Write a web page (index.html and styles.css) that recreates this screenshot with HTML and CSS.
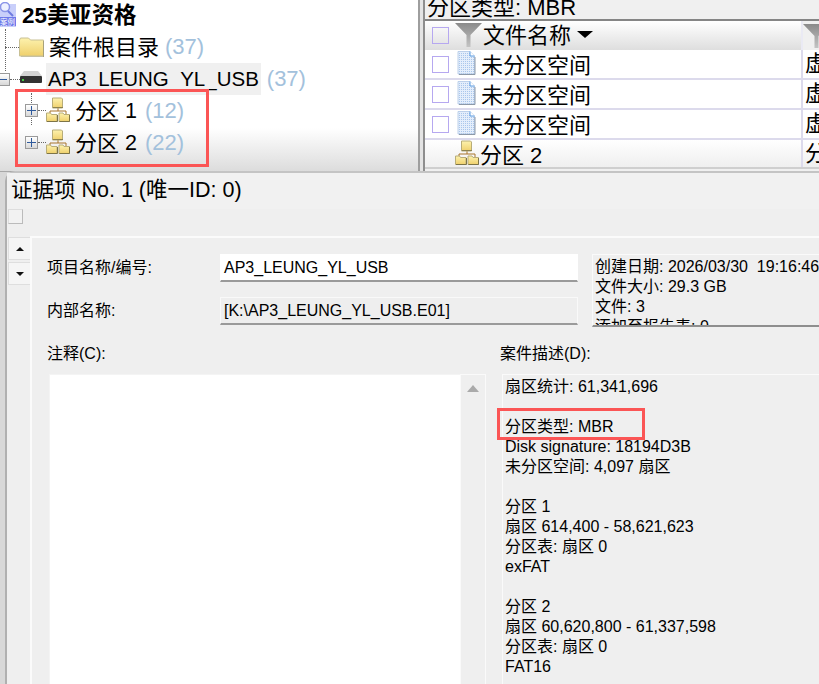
FILE: index.html
```html
<!DOCTYPE html>
<html lang="zh-CN">
<head>
<meta charset="utf-8">
<title>证据项</title>
<link rel="stylesheet" href="styles.css">
</head>
<body>
<svg class="defs" width="0" height="0" aria-hidden="true">
  <defs>
    <linearGradient id="fold" x1="0" y1="0" x2="0" y2="1"><stop offset="0" stop-color="#fdf2ae"/><stop offset="1" stop-color="#efd06c"/></linearGradient>
    <linearGradient id="funnel" x1="0" y1="0" x2="0" y2="1"><stop offset="0" stop-color="#8a8a8a"/><stop offset="1" stop-color="#c4c4c4"/></linearGradient>
    <pattern id="dots" width="2" height="2" patternUnits="userSpaceOnUse"><rect width="2" height="2" fill="#e4eefb"/><rect width="1" height="1" fill="#a9c6ec"/></pattern>
    <symbol id="parts" viewBox="0 0 24 25">
      <path d="M12 10v4M4 17v-3h16v3" fill="none" stroke="#a8752a" stroke-width="1"/>
      <path d="M6.500 1h9l1 1v9h-10z" fill="url(#fold)" stroke="#b8ad78"/>
      <path d="M7 10.500h10" stroke="#8c8250"/>
      <path d="M.5 16h4l1 1.500h5.500v7H.500z" fill="url(#fold)" stroke="#b8ad78"/>
      <path d="M1 24.500h10.500V18" fill="none" stroke="#7d7448"/>
      <path d="M13 16h4l1 1.500h5.500v7H13z" fill="url(#fold)" stroke="#b8ad78"/>
      <path d="M13.500 24.500h10V18" fill="none" stroke="#7d7448"/>
    </symbol>
    <symbol id="doc" viewBox="0 0 19 24">
      <path d="M1 .5h12l4.500 4.500v18H1z" fill="url(#dots)" stroke="#bcd0ea"/>
      <path d="M13 .5v4.500h4.500" fill="#fff" stroke="#5a9be0"/>
      <path d="M2 23.500h16V6" fill="none" stroke="#8d99a8"/>
    </symbol>
    <symbol id="fun" viewBox="0 0 27 24">
      <path d="M0 0h27L15.500 12v12h-4V12z" fill="url(#funnel)"/>
    </symbol>
  </defs>
</svg>
<div class="app">
  <div class="top">
    <section class="tree">
      <div class="case">
        <svg class="case-icon" width="16" height="25" viewBox="0 0 16 25">
          <rect y="2" width="16" height="23" fill="#c9cffa"/>
          <circle cx="5" cy="5" r="4.500" fill="#eef1ff" stroke="#8c96e8" stroke-width="1.500"/>
          <path d="M8 9l5 5" stroke="#6f7be0" stroke-width="2"/>
          <rect y="15" width="16" height="9" fill="#6d78ea"/>
          <text class="case-icon-text" x="0" y="22.500">案例</text>
        </svg>
        <strong class="case-name">25美亚资格</strong>
      </div>
      <div class="node lvl1">
        <span class="vline v-root"></span>
        <span class="hline"></span>
        <svg class="folder" width="25" height="20" viewBox="0 0 25 20">
          <path d="M.5 3l1-2h8l2 2h13v16H.500z" fill="url(#fold)" stroke="#c8c094"/>
          <path d="M24.500 4v16H2" fill="none" stroke="#a8a27c"/>
        </svg>
        <span class="zh">案件根目录</span><span class="count">(37)</span>
      </div>
      <div class="node lvl1">
        <span class="box box-minus"><i class="bar"></i></span>
        <span class="hline hline-short"></span>
        <svg class="drive" width="22" height="12" viewBox="0 0 22 12">
          <path d="M4 0h14l4 5H0z" fill="#d4d4d4"/>
          <rect y="5" width="22" height="7" rx="1" fill="#333"/>
          <rect x="2" y="8" width="2" height="2" fill="#4c4"/>
        </svg>
        <span class="sel">AP3_LEUNG_YL_USB</span><span class="count">(37)</span>
      </div>
      <div class="node lvl2">
        <span class="vline v-part"></span>
        <span class="box"><i class="bar"></i><i class="bar bar-v"></i></span>
        <span class="hline hline-tiny"></span>
        <svg class="parts" width="24" height="25"><use href="#parts"/></svg>
        <span class="zh">分区</span><span class="num">1</span><span class="count">(12)</span>
      </div>
      <div class="node lvl2">
        <span class="box"><i class="bar"></i><i class="bar bar-v"></i></span>
        <span class="hline hline-tiny"></span>
        <svg class="parts" width="24" height="25"><use href="#parts"/></svg>
        <span class="zh">分区</span><span class="num">2</span><span class="count">(22)</span>
      </div>
    </section>
    <div class="split"></div>
    <section class="list">
      <div class="list-caption">分区类型: MBR</div>
      <div class="grid-head">
        <div class="col-main">
          <span class="check"></span>
          <svg class="funnel" width="27" height="24"><use href="#fun"/></svg>
          <span class="head-label">文件名称</span>
          <span class="sort"></span>
        </div>
        <div class="col-next"><svg class="funnel" width="27" height="24"><use href="#fun"/></svg></div>
      </div>
      <div class="grid-row">
        <div class="col-main"><span class="check"></span><svg class="doc" width="19" height="24"><use href="#doc"/></svg><span class="cell-text">未分区空间</span></div>
        <div class="col-next">虚</div>
      </div>
      <div class="grid-row">
        <div class="col-main"><span class="check"></span><svg class="doc" width="19" height="24"><use href="#doc"/></svg><span class="cell-text">未分区空间</span></div>
        <div class="col-next">虚</div>
      </div>
      <div class="grid-row">
        <div class="col-main"><span class="check"></span><svg class="doc" width="19" height="24"><use href="#doc"/></svg><span class="cell-text">未分区空间</span></div>
        <div class="col-next">虚</div>
      </div>
      <div class="grid-row grid-row-part">
        <div class="col-main"><svg class="parts parts-row" width="24" height="25"><use href="#parts"/></svg><span class="cell-text">分区 2</span></div>
        <div class="col-next">分</div>
      </div>
    </section>
  </div>

  <section class="window">
    <div class="win-title">证据项 No. 1 (唯一ID: 0)</div>
    <div class="win-tool"><span class="tool-btn"></span></div>
    <div class="win-body">
      <div class="spin">
        <button class="spin-btn" type="button"><span class="tri-up"></span></button>
        <button class="spin-btn" type="button"><span class="tri-down"></span></button>
      </div>
      <div class="panel">
        <div class="form-row">
          <div class="fields">
            <label class="f-label">项目名称/编号:</label>
            <div class="input input-white">AP3_LEUNG_YL_USB</div>
            <label class="f-label">内部名称:</label>
            <div class="input">[K:\AP3_LEUNG_YL_USB.E01]</div>
          </div>
          <div class="info">
            <div>创建日期: 2026/03/30&nbsp; 19:16:46</div>
            <div>文件大小: 29.3 GB</div>
            <div>文件: 3</div>
            <div>添加至报告表: 0</div>
          </div>
        </div>
        <div class="memo-row">
          <div class="memo-col">
            <div class="memo-label memo-label-left">注释(C):</div>
            <div class="memo-left">
              <div class="memo-white"></div>
              <div class="scroll"><span class="scroll-up"></span></div>
            </div>
          </div>
          <div class="desc-col">
            <div class="memo-label desc-label">案件描述(D):</div>
            <div class="desc">扇区统计: 61,341,696

分区类型: MBR
Disk signature: 18194D3B
未分区空间: 4,097 扇区

分区 1
扇区 614,400 - 58,621,623
分区表: 扇区 0
exFAT

分区 2
扇区 60,620,800 - 61,337,598
分区表: 扇区 0
FAT16</div>
          </div>
        </div>
      </div>
    </div>
  </section>

  <div class="mark mark-tree"></div>
  <div class="mark mark-type"></div>
</div>
</body>
</html>
```
FILE: styles.css
```css
* { box-sizing: border-box; }
html, body { margin: 0; padding: 0; height: 100%; }
body {
  overflow: hidden;
  background: #d8d8d8;
  color: #000;
  font-family: "Liberation Sans", "Noto Sans CJK SC", sans-serif;
}
.defs { position: absolute; }
.app { position: relative; width: 819px; height: 684px; overflow: hidden; display: flex; flex-direction: column; }

/* upper panes */
.top { height: 172px; flex: none; display: flex; border-bottom: 1px solid #a8a8a8; }
.tree {
  width: 418px; flex: none; overflow: hidden;
  background: linear-gradient(#fff 0, #fff 128px, #dcdcdc 171px);
}
.case { height: 31px; display: flex; align-items: center; }
.case-icon { margin-top: -2px; flex: none; }
.case-icon-text { font-size: 7.500px; fill: #fff; }
.case-name { margin-left: 6px; font-size: 22.400px; line-height: 32px; }
.node { position: relative; height: 32px; display: flex; align-items: center; font-size: 22px; white-space: nowrap; }
.lvl2 { padding-left: 25px; }
.vline { position: absolute; width: 0; border-left: 1px dotted #666; }
.v-root { left: 5px; top: -2px; height: 42px; }
.v-part { left: 31px; top: -2px; height: 32px; }
.hline { display: block; width: 14px; margin-left: 5px; border-top: 1px dotted #666; flex: none; }
.hline-short { width: 10px; margin-left: 0; }
.hline-tiny { width: 8px; margin-left: 0; margin-top: -2px; }
.folder { flex: none; }
.drive { flex: none; margin-top: -5px; }
.parts { flex: none; margin-top: -3px; }
.zh { margin-left: 5px; margin-top: -4px; }
.lvl2 .zh { margin-left: 5px; }
.sel {
  margin-left: 4px; padding: 0 2px; height: 32px; line-height: 32px;
  background: #f0f0f0; font-size: 20.500px;
}
.num { margin-left: 6px; font-size: 21.500px; }
.count { margin-left: 6px; color: #a3c1dc; font-size: 22px; }
.num + .count { margin-left: 8px; }
.box {
  position: relative; display: block; flex: none; width: 13px; height: 13px;
  border: 1px solid #9a9a9a; background: linear-gradient(#fff, #d8d8d8);
}
.lvl2 .box { margin-top: -2px; }
.box-minus { margin-left: -3px; }
.bar { position: absolute; left: 1px; top: 5px; width: 9px; height: 1px; background: #2f5a9c; }
.bar-v { left: 5px; top: 1px; width: 1px; height: 9px; }
.box-minus .bar { left: 0; }

.split {
  width: 7px; flex: none;
  background: linear-gradient(90deg, #9e9e9e 0, #9e9e9e 2px, #e4e4e4 2px, #e4e4e4 5px, #8e8e8e 5px);
}
.list { flex: 1; min-width: 0; background: #f0f0f0; overflow: hidden; }
.list-caption { height: 19px; margin-left: 2px; font-size: 22px; line-height: 16px; white-space: nowrap; }
.grid-head {
  height: 31px; display: flex; border-top: 2px solid #858585;
  background: linear-gradient(#fff, #dedede);
}
.grid-row {
  height: 30px; display: flex; background: #fff;
  border-bottom: 2px solid #dcdaec; font-size: 22px;
}
.grid-row-part { background: linear-gradient(#fff, #efefef); height: 29px; border-bottom: 2px solid #cfcfcf; }
.col-main { width: 376px; flex: none; display: flex; align-items: center; padding-left: 7px; white-space: nowrap; }
.col-next { flex: 1; padding-left: 2px; border-left: 2px solid #dcdaec; overflow: hidden; white-space: nowrap; line-height: 28px; }
.grid-head .col-next { border-left-color: #eaeaf4; background: #f0f0f0; padding-left: 0; }
.check { width: 17px; height: 17px; flex: none; border: 1px solid #b6a8f0; background: #fff; }
.grid-head .check { background: transparent; }
.funnel { margin-left: 6px; margin-top: -2px; flex: none; }
.grid-head .col-next .funnel { margin-left: 0; display: block; margin-top: 3px; }
.doc { margin-left: 8px; flex: none; margin-top: -2px; }
.cell-text { margin-top: -2px; }
.doc + .cell-text { margin-left: 5px; }
.head-label { margin-left: 1px; margin-top: -5px; font-size: 22px; }
.sort { margin-left: 6px; margin-top: -2px; width: 0; height: 0; border: 8px solid transparent; border-top: 7px solid #000; border-bottom: 0; }
.parts-row { margin-left: 23px; margin-top: -2px; }
.parts-row + .cell-text { margin-left: 1px; }

/* dialog */
.window {
  flex: 1; min-height: 0; margin-left: 5px; margin-top: -1px;
  display: flex; flex-direction: column;
  background: #efefef;
  border-top: 2px solid #c4c4c4; border-left: 2px solid #b0b0b0;
  border-top-left-radius: 10px;
  position: relative;
}
.win-title { height: 36px; padding-left: 4px; font-size: 21.500px; line-height: 35px; white-space: nowrap; background: #f1f1f1; }
.win-tool { height: 27px; }
.tool-btn { display: block; width: 15px; height: 15px; margin-left: 1px; background: #f2f2f2; border: 1px solid #ddd; border-right-color: #bbb; border-bottom-color: #bbb; }
.win-body { flex: 1; min-height: 0; display: flex; }
.spin { width: 23px; flex: none; padding-left: 1px; margin-top: 1px; display: flex; flex-direction: column; gap: 2px; }
.spin-btn {
  width: 23px; height: 23px; padding: 0; display: flex; align-items: center; justify-content: center;
  background: #f5f5f5; border: 1px solid #dedede; flex: none;
}
.tri-up { width: 0; height: 0; border: 4px solid transparent; border-bottom: 4px solid #111; border-top: 0; }
.tri-down { width: 0; height: 0; border: 4px solid transparent; border-top: 4px solid #111; border-bottom: 0; }
.panel {
  flex: 1; min-width: 0; overflow: hidden;
  border-top: 2px solid #fbfbfb; border-left: 2px solid #fbfbfb;
  padding: 16px 0 0 16px;
}
.form-row { display: flex; height: 73px; font-size: 16px; }
.fields { display: grid; grid-template-columns: 172px 358px; grid-template-rows: 28px 28px; row-gap: 15px; flex: none; }
.f-label { align-self: center; line-height: 28px; margin-left: -1px; }
.input {
  padding: 0 3px; font-size: 16px; line-height: 25px; white-space: nowrap;
  background: #eee; border: 1px solid #f9f9f9; border-bottom: 2px solid #9a9a9a;
}
.input-white { background: #fff; border-color: #fff; border-bottom-color: #9a9a9a; }
.info {
  margin-left: 14px; width: 260px; height: 73px; overflow: hidden; padding: 2px 0 0 2px;
  line-height: 20px; white-space: nowrap;
  border-top: 1px solid #fafafa; border-left: 1px solid #fafafa; border-bottom: 2px solid #8e8e8e;
}
.memo-row { display: flex; margin-top: 17px; font-size: 16px; }
.memo-col { width: 438px; flex: none; }
.memo-label { height: 30px; line-height: 20px; }
.memo-label-left { margin-left: -1px; }
.memo-left { display: flex; height: 330px; margin-left: 1px; }
.memo-white { width: 411px; background: #fff; border: 1px solid #f4f4f4; border-right: 0; }
.scroll { width: 26px; flex: none; background: #efefef; border: 1px solid #fafafa; border-bottom: 0; display: flex; justify-content: center; padding-top: 10px; }
.scroll-up { width: 0; height: 0; border: 6px solid transparent; border-bottom: 7px solid #aaa; border-top: 0; }
.desc-col { margin-left: 14px; flex: none; width: 320px; }
.desc-label { margin-left: 0; }
.desc {
  margin-left: 2px; height: 330px; overflow: hidden; padding: 2px 0 0 2px;
  line-height: 20px; white-space: pre-line;
  border-top: 1px solid #fafafa; border-left: 1px solid #fafafa;
}

/* reviewer's red annotation boxes */
.mark { position: absolute; border: 3px solid #fb5555; }
.mark-tree { left: 15px; top: 89px; width: 194px; height: 78px; }
.mark-type { left: 497px; top: 408px; width: 148px; height: 32px; }
```
